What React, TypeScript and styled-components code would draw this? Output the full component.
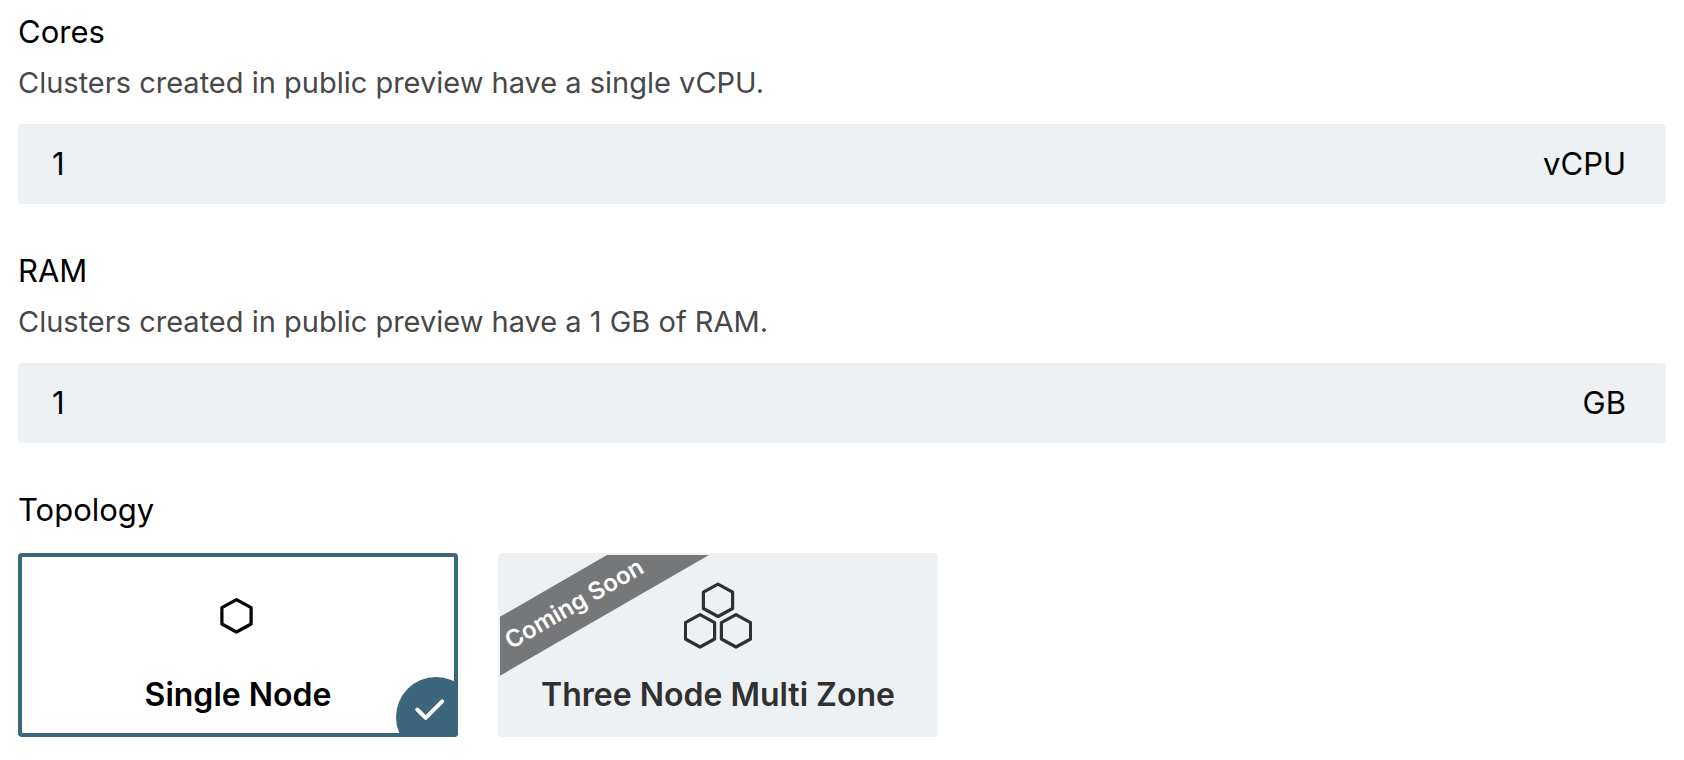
import React from "react";
import styled, { createGlobalStyle } from "styled-components";

const GlobalStyle = createGlobalStyle`
  *, *::before, *::after { box-sizing: border-box; }
  body {
    margin: 0;
    background: #ffffff;
    color: #000000;
    font-family: Inter, "Liberation Sans", sans-serif;
    font-size: 31px;
    line-height: 40px;
  }
`;

const Form = styled.form`
  display: flex;
  flex-direction: column;
  gap: 47px;
  padding: 12px 18px 22px;
`;

const Field = styled.div`
  display: flex;
  flex-direction: column;
`;

const FieldLabel = styled.label`
  display: block;
`;

const Description = styled.p`
  margin: 13px 0 23px;
  color: #484848;
  font-size: 29px;
  line-height: 36px;
`;

const ValueBox = styled.div`
  display: flex;
  align-items: center;
  height: 80px;
  padding: 0 40px 0 34px;
  border-radius: 4px;
  background: #edf1f4;
`;

const ValueInput = styled.input`
  flex: 1;
  min-width: 0;
  padding: 0;
  border: 0;
  outline: 0;
  background: transparent;
  color: inherit;
  font: inherit;
`;

const Unit = styled.span`
  flex: none;
`;

const Topology = styled.fieldset`
  min-width: 0;
  margin: 0;
  padding: 0;
  border: 0;
`;

const Legend = styled.legend`
  margin-bottom: 23px;
  padding: 0;
`;

const Options = styled.div`
  display: flex;
  flex-wrap: wrap;
  gap: 40px;
`;

const Card = styled.label<{ $selected?: boolean }>`
  position: relative;
  display: flex;
  flex-direction: column;
  align-items: center;
  gap: 25px;
  width: 440px;
  padding: 29px 16px 22px;
  border-radius: 4px;
  overflow: hidden;
  background: ${(p) => (p.$selected ? "#ffffff" : "#edf1f4")};
  box-shadow: ${(p) => (p.$selected ? "inset 0 0 0 4px #3c667b" : "none")};
  color: ${(p) => (p.$selected ? "#000000" : "#2f3031")};
  font-size: 32px;
  font-weight: 600;
  white-space: nowrap;
`;

const CardRadio = styled.input`
  position: absolute;
  inset: 0;
  width: 100%;
  height: 100%;
  margin: 0;
  opacity: 0;
`;

const NodeIcon = styled.svg`
  display: block;
  width: 68px;
  height: 68px;
  fill: none;
  stroke: currentColor;
  stroke-width: 3.2;
  stroke-linejoin: round;
`;

const Badge = styled.span`
  position: absolute;
  right: -18px;
  bottom: -20px;
  width: 80px;
  height: 80px;
  border-radius: 50%;
  background: #3c667b;

  svg {
    display: block;
  }
`;

const RibbonClip = styled.span`
  position: absolute;
  inset: 2px;
  overflow: hidden;
`;

const Ribbon = styled.span`
  position: absolute;
  top: 23px;
  left: -106px;
  width: 360px;
  padding: 12px 0;
  background: #767779;
  color: #ffffff;
  font-size: 24px;
  line-height: 27px;
  text-align: center;
  transform: rotate(-30deg);
`;

const HEXAGON = "M0 -16.2 L14.6 -8.2 V8.2 L0 16.2 L-14.6 8.2 V-8.2 Z";

function Hexagons({ centers }: { centers: [number, number][] }) {
  return (
    <NodeIcon viewBox="0 0 68 68" aria-hidden="true">
      {centers.map(([x, y]) => (
        <path key={`${x}-${y}`} d={HEXAGON} transform={`translate(${x} ${y})`} />
      ))}
    </NodeIcon>
  );
}

interface ResourceProps {
  id: string;
  label: string;
  description: string;
  unit: string;
}

function Resource({ id, label, description, unit }: ResourceProps) {
  return (
    <Field>
      <FieldLabel htmlFor={id}>{label}</FieldLabel>
      <Description id={`${id}-help`}>{description}</Description>
      <ValueBox>
        <ValueInput id={id} value="1" readOnly aria-describedby={`${id}-help`} />
        <Unit>{unit}</Unit>
      </ValueBox>
    </Field>
  );
}

export default function App() {
  return (
    <>
      <GlobalStyle />
      <Form>
        <Resource
          id="cores"
          label="Cores"
          description="Clusters created in public preview have a single vCPU."
          unit="vCPU"
        />
        <Resource
          id="ram"
          label="RAM"
          description="Clusters created in public preview have a 1 GB of RAM."
          unit="GB"
        />
        <Topology>
          <Legend>Topology</Legend>
          <Options>
            <Card $selected>
              <CardRadio type="radio" name="topology" value="single" defaultChecked />
              <Hexagons centers={[[32.5, 33.8]]} />
              Single Node
              <Badge>
                <svg width="80" height="80" viewBox="0 0 80 80" aria-hidden="true">
                  <path
                    d="M21.3 32.5 L29.7 40.8 L46.2 24.3"
                    fill="none"
                    stroke="#ffffff"
                    strokeWidth="4"
                    strokeLinecap="round"
                    strokeLinejoin="round"
                  />
                </svg>
              </Badge>
            </Card>
            <Card>
              <CardRadio type="radio" name="topology" value="multi" disabled />
              <Hexagons centers={[[34, 18.3], [16, 48.8], [52, 48.8]]} />
              Three Node Multi Zone
              <RibbonClip>
                <Ribbon>Coming Soon</Ribbon>
              </RibbonClip>
            </Card>
          </Options>
        </Topology>
      </Form>
    </>
  );
}
